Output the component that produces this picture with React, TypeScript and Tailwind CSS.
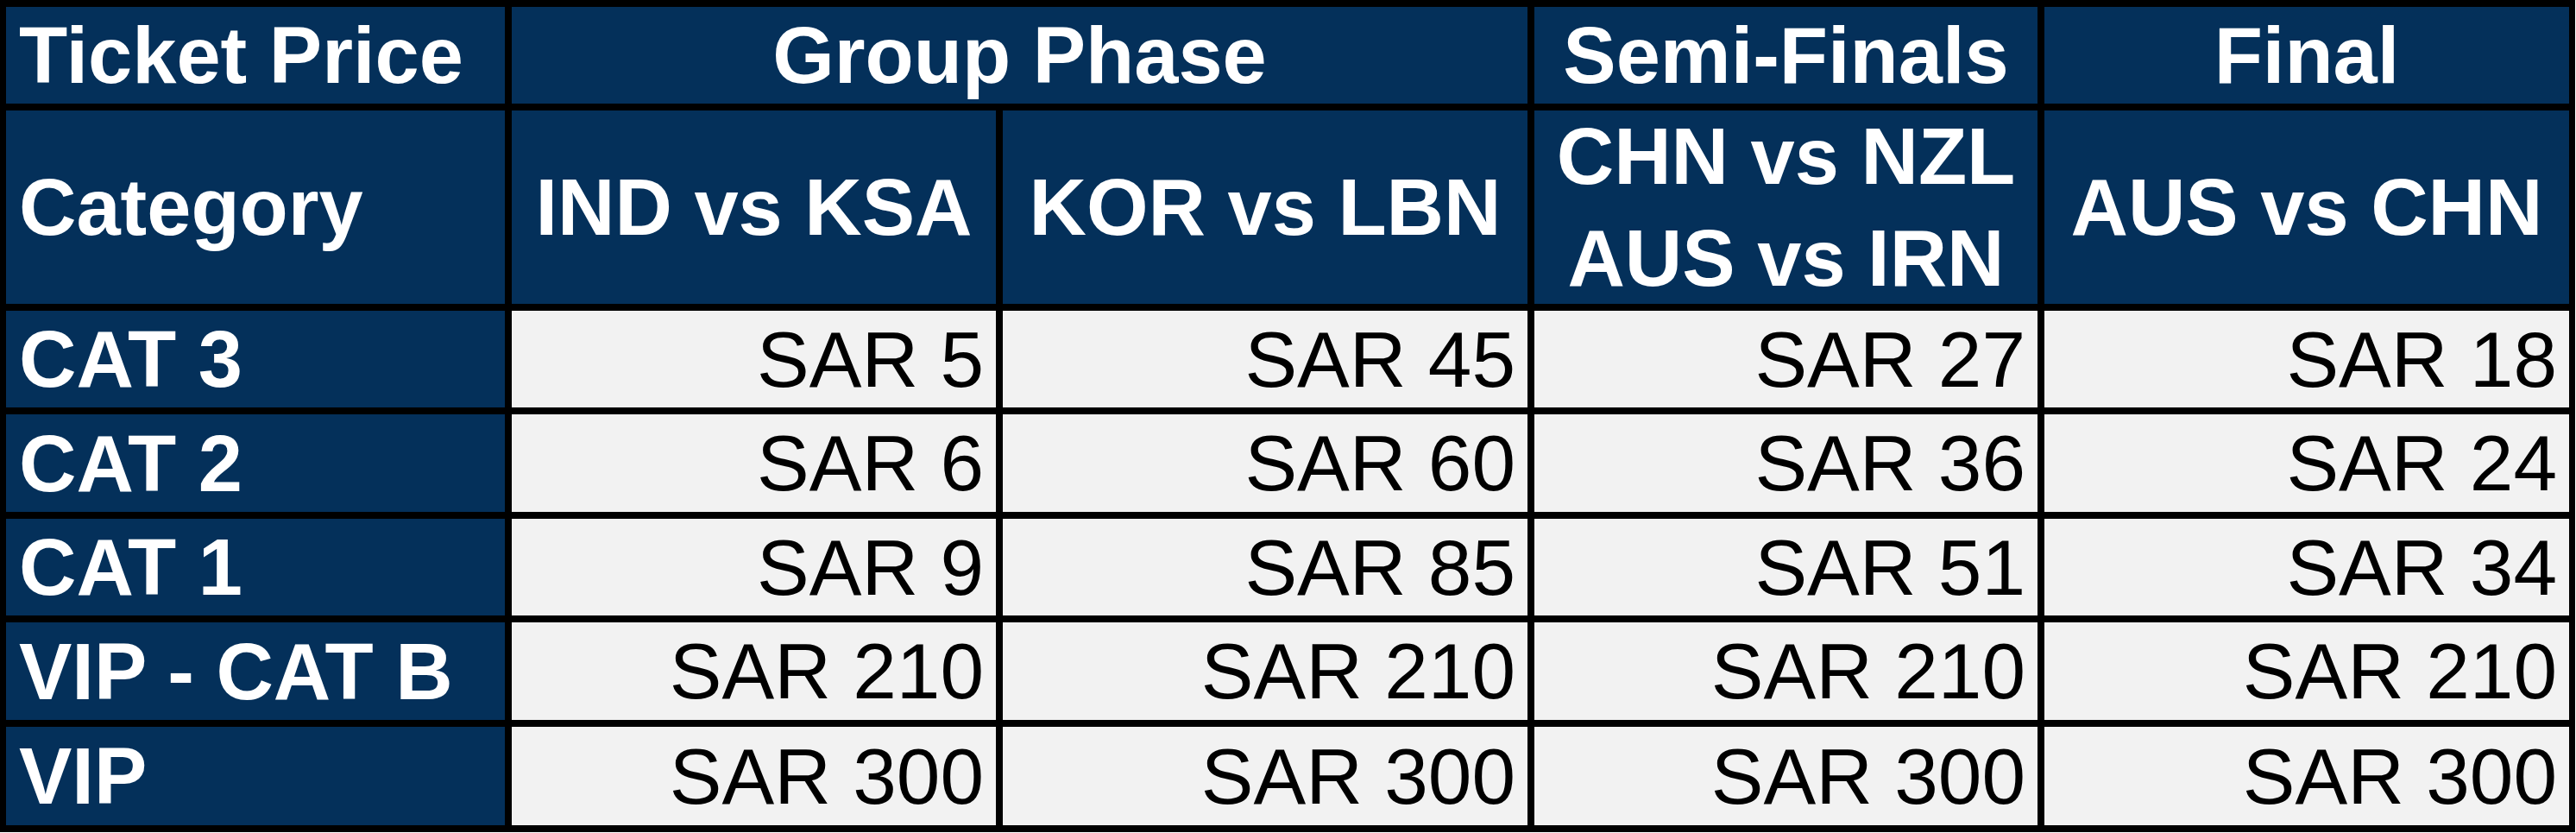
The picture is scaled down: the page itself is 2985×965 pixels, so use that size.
const rows: [string, string[]][] = [
  ["CAT 3", ["SAR 5", "SAR 45", "SAR 27", "SAR 18"]],
  ["CAT 2", ["SAR 6", "SAR 60", "SAR 36", "SAR 24"]],
  ["CAT 1", ["SAR 9", "SAR 85", "SAR 51", "SAR 34"]],
  ["VIP - CAT B", ["SAR 210", "SAR 210", "SAR 210", "SAR 210"]],
  ["VIP", ["SAR 300", "SAR 300", "SAR 300", "SAR 300"]],
];

const navy = "flex items-center bg-[#04305a] text-[92px] text-white font-bold";
const head = `${navy} justify-center leading-none`;
const label = `${navy} pl-[15px] leading-none`;
const price = "flex items-center justify-end bg-[#f2f2f2] pr-[14px] text-[91px] text-black leading-none";

export default function App() {
  return (
    <div className="min-h-screen bg-white font-['Liberation_Sans',Arial,sans-serif]">
      <div className="grid w-[2984px] grid-cols-[578px_561px_608px_583px_608px] grid-rows-[112px_224px_112px_113px_112px_113px_114px] gap-[8px] bg-black px-[7px] py-[8px]">
        <div className={label}>Ticket Price</div>
        <div className={`${head} col-span-2`}>Group Phase</div>
        <div className={head}>Semi-Finals</div>
        <div className={head}>Final</div>

        <div className={label}>Category</div>
        <div className={head}>IND vs KSA</div>
        <div className={head}>KOR vs LBN</div>
        {/* two fixtures share the semi-final slot */}
        <div className={`${navy} flex-col justify-center leading-[118px]`}>
          <span>CHN vs NZL</span>
          <span>AUS vs IRN</span>
        </div>
        <div className={head}>AUS vs CHN</div>

        {rows.map(([name, prices]) => (
          <div key={name} className="contents">
            <div className={label}>{name}</div>
            {prices.map((p, i) => (
              <div key={i} className={price}>
                {p}
              </div>
            ))}
          </div>
        ))}
      </div>
    </div>
  );
}
